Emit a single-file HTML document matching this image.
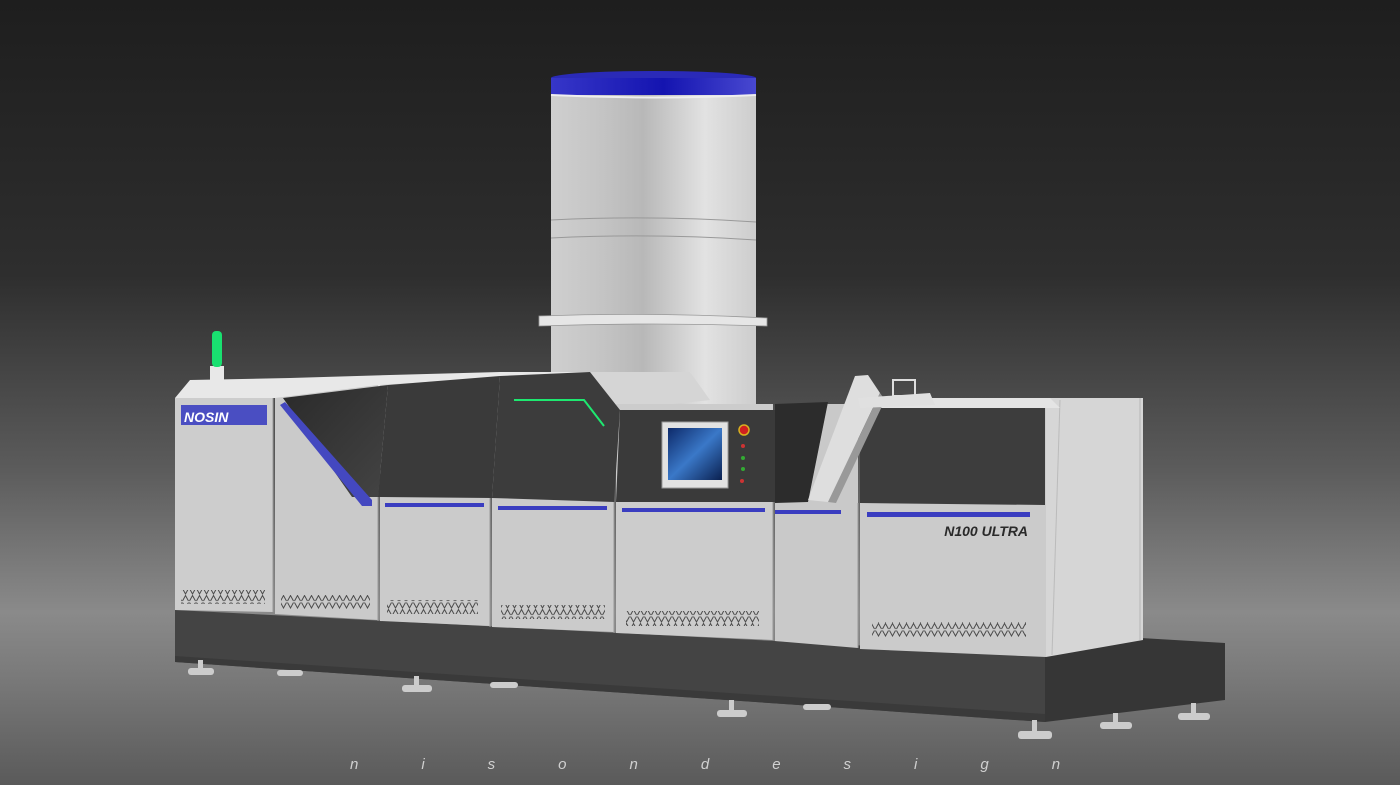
<!DOCTYPE html>
<html><head><meta charset="utf-8"><style>
html,body{margin:0;padding:0;width:1400px;height:785px;overflow:hidden;background:#333}
svg{display:block}
</style></head><body>
<svg width="1400" height="785" viewBox="0 0 1400 785" xmlns="http://www.w3.org/2000/svg">
<defs>
<linearGradient id="bg" x1="0" y1="0" x2="0" y2="1">
<stop offset="0" stop-color="#1e1e1e"/><stop offset="0.35" stop-color="#2e2e2e"/>
<stop offset="0.6" stop-color="#5c5c5c"/><stop offset="0.78" stop-color="#8a8a8a"/>
<stop offset="0.86" stop-color="#7a7a7a"/><stop offset="1" stop-color="#5a5a5a"/>
</linearGradient>
<linearGradient id="cyl" x1="0" y1="0" x2="1" y2="0">
<stop offset="0" stop-color="#cfcfcf"/><stop offset="0.25" stop-color="#c4c4c4"/>
<stop offset="0.45" stop-color="#b8b8b8"/><stop offset="0.75" stop-color="#e2e2e2"/><stop offset="1" stop-color="#cdcdcd"/>
</linearGradient>
<linearGradient id="blue" x1="0" y1="0" x2="1" y2="0">
<stop offset="0" stop-color="#3636c8"/><stop offset="0.55" stop-color="#1414b0"/><stop offset="1" stop-color="#4848d0"/>
</linearGradient>
<linearGradient id="dark" x1="0" y1="0" x2="1" y2="1">
<stop offset="0" stop-color="#2a2a2a"/><stop offset="1" stop-color="#444"/>
</linearGradient>
<linearGradient id="scr" x1="0" y1="0" x2="1" y2="1">
<stop offset="0" stop-color="#0d2a6a"/><stop offset="0.5" stop-color="#3a78c8"/><stop offset="1" stop-color="#0a2050"/>
</linearGradient>
<pattern id="vent" width="7" height="14" patternUnits="userSpaceOnUse">
<path d="M0.5 0.5 L3.5 6 L6.5 0.5 M0.5 13 L3.5 7.5 L6.5 13" stroke="#4a4a4a" stroke-width="1" fill="none"/>
</pattern>
</defs>
<rect width="1400" height="785" fill="url(#bg)"/>

<!-- cylinder -->
<rect x="551" y="84" width="205" height="320" fill="url(#cyl)"/>
<ellipse cx="653.5" cy="78" rx="102.5" ry="7" fill="#2a2ab8"/>
<rect x="551" y="78" width="205" height="17" fill="url(#blue)"/>
<path d="M551 95 Q653 100 756 95" stroke="#eee" stroke-width="2" fill="none"/>
<path d="M551 220 Q653 215 756 222" stroke="#999" fill="none"/>
<path d="M551 238 Q653 233 756 240" stroke="#999" fill="none"/>
<path d="M539 316 Q653 312 767 318 L767 326 Q653 322 539 326 Z" fill="#e6e6e6" stroke="#999" stroke-width="0.8"/>

<!-- base -->
<polygon points="175,610 1045,655 1045,722 175,662" fill="#444"/>
<polygon points="1045,655 1140,638 1225,643 1225,700 1045,722" fill="#363636"/>
<polygon points="175,656 1045,714 1045,722 175,662" fill="#3a3a3a"/>
<!-- feet -->
<g fill="#ccc">
<rect x="188" y="668" width="26" height="7" rx="3"/><rect x="198" y="660" width="5" height="10"/>
<rect x="277" y="670" width="26" height="6" rx="3"/>
<rect x="402" y="685" width="30" height="7" rx="3"/><rect x="414" y="676" width="5" height="10"/>
<rect x="490" y="682" width="28" height="6" rx="3"/>
<rect x="717" y="710" width="30" height="7" rx="3"/><rect x="729" y="700" width="5" height="11"/>
<rect x="803" y="704" width="28" height="6" rx="3"/>
<rect x="1018" y="731" width="34" height="8" rx="3"/><rect x="1032" y="720" width="5" height="12"/>
<rect x="1100" y="722" width="32" height="7" rx="3"/><rect x="1113" y="713" width="5" height="10"/>
<rect x="1178" y="713" width="32" height="7" rx="3"/><rect x="1191" y="703" width="5" height="10"/>
</g>

<!-- green light -->
<rect x="210" y="366" width="14" height="14" fill="#e8e8e8"/>
<rect x="212" y="331" width="10" height="36" rx="4" fill="#19e070"/>

<!-- roof -->
<polygon points="175,398 190,380 290,378 390,375 500,372 590,372 690,372 705,395 620,410 610,412 380,388 283,398" fill="#e8e8e8"/>
<polygon points="590,372 690,372 710,400 620,410" fill="#d5d5d5"/>

<!-- module fronts -->
<polygon points="175,398 273,398 273,612 175,610" fill="#cdcdcd"/>
<polygon points="275,398 378,385 378,620 275,614" fill="#cacaca"/>
<polygon points="380,385 490,378 490,626 380,621" fill="#cbcbcb"/>
<polygon points="492,378 614,405 614,632 492,627" fill="#cbcbcb"/>
<polygon points="616,404 773,404 773,640 616,633" fill="#cccccc"/>
<polygon points="775,404 858,404 858,648 775,641" fill="#c9c9c9"/>
<polygon points="860,398 1046,398 1046,657 860,649" fill="#cbcbcb"/>
<polygon points="1046,398 1143,398 1143,640 1046,657" fill="#d6d6d6"/>
<line x1="1140" y1="398" x2="1140" y2="640" stroke="#b5b5b5"/>
<line x1="1060" y1="400" x2="1052" y2="655" stroke="#bbb"/>
<polygon points="862,398 1050,398 1060,408 862,408" fill="#e4e4e4"/>

<!-- dark panels -->
<polygon points="283,398 388,385 378,497 352,497" fill="url(#dark)"/>
<polygon points="388,385 500,376 492,498 378,497" fill="#3a3a3a"/>
<polygon points="500,376 590,372 620,410 614,502 492,498" fill="#3c3c3c"/>
<polygon points="620,410 778,410 775,502 616,502" fill="#3a3a3a"/>
<polygon points="860,408 1045,408 1045,505 860,503" fill="#3d3d3d"/>
<polygon points="775,404 828,402 808,502 775,503" fill="#2c2c2c"/>
<!-- conveyor -->
<polygon points="808,500 855,376 868,375 880,393 828,502" fill="#dedede"/>
<polygon points="828,502 880,393 885,400 836,503" fill="#999"/>
<rect x="893" y="380" width="22" height="16" fill="none" stroke="#ddd" stroke-width="2"/>
<polygon points="858,398 930,393 935,405 860,408" fill="#e0e0e0"/>

<!-- green line -->
<polyline points="514,400 584,400 604,426" fill="none" stroke="#1ee870" stroke-width="2"/>

<!-- blue strips -->
<polygon points="280,405 285,402 372,500 372,506 362,506" fill="#4448c0"/>
<rect x="385" y="503" width="99" height="4" fill="#3a3dc0"/>
<rect x="498" y="506" width="109" height="4" fill="#3a3dc0"/>
<rect x="622" y="508" width="143" height="4" fill="#3a3dc0"/>
<rect x="775" y="510" width="66" height="4" fill="#3a3dc0"/>
<rect x="867" y="512" width="163" height="5" fill="#3a3dc0"/>

<!-- logo -->
<rect x="181" y="405" width="86" height="20" fill="#4a4ec2"/>
<text x="184" y="422" font-family="Liberation Sans, sans-serif" font-weight="bold" font-style="italic" font-size="14" fill="#fff">NOSIN</text>

<!-- screen -->
<rect x="662" y="422" width="66" height="66" fill="#e2e2e2" stroke="#999"/>
<rect x="668" y="428" width="54" height="52" fill="url(#scr)"/>
<circle cx="744" cy="430" r="5" fill="#d02020" stroke="#d8b020" stroke-width="1.5"/>
<circle cx="743" cy="446" r="2" fill="#c33"/><circle cx="743" cy="458" r="2" fill="#3a3"/>
<circle cx="743" cy="469" r="2" fill="#3a3"/><circle cx="742" cy="481" r="2" fill="#c33"/>

<text x="1028" y="536" text-anchor="end" font-family="Liberation Sans, sans-serif" font-weight="bold" font-style="italic" font-size="14" fill="#2a2a2a">N100 ULTRA</text>

<!-- vents -->
<rect x="181" y="590" width="84" height="14" fill="url(#vent)"/>
<rect x="281" y="595" width="89" height="14" fill="url(#vent)"/>
<rect x="387" y="600" width="91" height="14" fill="url(#vent)"/>
<rect x="501" y="605" width="104" height="14" fill="url(#vent)"/>
<rect x="626" y="611" width="133" height="15" fill="url(#vent)"/>
<rect x="872" y="622" width="154" height="15" fill="url(#vent)"/>

<!-- seams -->
<g stroke="#999" stroke-width="1">
<line x1="273" y1="398" x2="273" y2="612"/><line x1="378" y1="497" x2="378" y2="621"/>
<line x1="490" y1="498" x2="490" y2="627"/><line x1="614" y1="502" x2="614" y2="633"/>
<line x1="773" y1="502" x2="773" y2="640"/><line x1="858" y1="503" x2="858" y2="648"/>
</g>

<text x="350" y="769" font-family="Liberation Sans, sans-serif" font-style="italic" font-size="15" fill="#d0d0d0" letter-spacing="63">nisondesign</text>
</svg>
</body></html>
